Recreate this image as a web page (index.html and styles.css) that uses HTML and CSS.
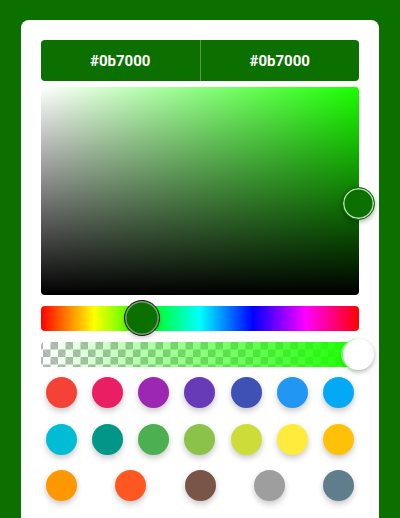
FILE: index.html
```html
<!DOCTYPE html>
<html>
<head>
<meta charset="utf-8">
<link rel="stylesheet" href="styles.css">
</head>
<body>
<div class="page">
  <div class="card">
    <div class="header">
      <div class="half">#0b7000</div>
      <div class="half right">#0b7000</div>
    </div>
    <div class="sat">
      <div class="sat-thumb"></div>
    </div>
    <div class="hue">
      <div class="hue-thumb"></div>
    </div>
    <div class="alpha">
      <div class="alpha-fill"></div>
      <div class="alpha-thumb"></div>
    </div>
    <div class="swatches">
      <div class="row">
        <span class="sw" style="background:#f44336"></span>
        <span class="sw" style="background:#e91e63"></span>
        <span class="sw" style="background:#9c27b0"></span>
        <span class="sw" style="background:#673ab7"></span>
        <span class="sw" style="background:#3f51b5"></span>
        <span class="sw" style="background:#2196f3"></span>
        <span class="sw" style="background:#03a9f4"></span>
      </div>
      <div class="row">
        <span class="sw" style="background:#00bcd4"></span>
        <span class="sw" style="background:#009688"></span>
        <span class="sw" style="background:#4caf50"></span>
        <span class="sw" style="background:#8bc34a"></span>
        <span class="sw" style="background:#cddc39"></span>
        <span class="sw" style="background:#ffeb3b"></span>
        <span class="sw" style="background:#ffc107"></span>
      </div>
      <div class="row">
        <span class="sw" style="background:#ff9800"></span>
        <span class="sw" style="background:#ff5722"></span>
        <span class="sw" style="background:#795548"></span>
        <span class="sw" style="background:#9e9e9e"></span>
        <span class="sw" style="background:#607d8b"></span>
      </div>
    </div>
  </div>
</div>
</body>
</html>
```
FILE: styles.css
```css
html, body {
  margin: 0;
  padding: 0;
  background: #0b7000;
  height: 100%;
  overflow: hidden;
}
.page {
  padding: 20px 21px 0 21px;
  font-family: Roboto, "Liberation Sans", sans-serif;
}
.card {
  background: #fff;
  border-radius: 8px;
  padding: 20px 20px 40px 20px;
  min-height: 560px;
  box-sizing: border-box;
}
.header {
  display: flex;
  height: 41px;
  border-radius: 4px;
  overflow: hidden;
  background: #0b7000;
}
.half {
  flex: 1;
  display: flex;
  align-items: center;
  justify-content: center;
  color: #fff;
  font-weight: 700;
  font-size: 15px;
}
.half.right {
  border-left: 1px solid rgba(255,255,255,0.3);
}
.sat {
  position: relative;
  margin-top: 6px;
  height: 208px;
  border-radius: 4px;
  background:
    linear-gradient(to top, #000, rgba(0,0,0,0)),
    linear-gradient(to right, #fff, #1aff00);
}
.sat-thumb {
  position: absolute;
  right: -16px;
  top: 99.5px;
  width: 33px;
  height: 33px;
  box-sizing: border-box;
  border-radius: 50%;
  background: #0b7000;
  border: 1px solid #0b7000;
  box-shadow: inset 0 0 0 1.5px rgba(255,255,255,0.75), 0 2px 5px rgba(0,0,0,0.3);
}
.hue {
  position: relative;
  margin-top: 11px;
  height: 25px;
  border-radius: 4px;
  background: linear-gradient(to right, #f00 0%, #ff0 16.66%, #0f0 33.33%, #0ff 50%, #00f 66.66%, #f0f 83.33%, #f00 100%);
}
.hue-thumb {
  position: absolute;
  left: 82.5px;
  top: -6px;
  width: 36px;
  height: 36px;
  box-sizing: border-box;
  border-radius: 50%;
  background: #0b7000;
  border: 1.5px solid #1a1a1a;
  box-shadow: inset 0 0 0 1.5px rgba(180,180,180,0.7), 0 2px 4px rgba(0,0,0,0.2);
}
.alpha {
  position: relative;
  margin-top: 11px;
  height: 25px;
  border-radius: 4px;
  background-color: #fff;
  background-image:
    linear-gradient(45deg, #b4b4b4 25%, transparent 25%, transparent 75%, #b4b4b4 75%),
    linear-gradient(45deg, #b4b4b4 25%, transparent 25%, transparent 75%, #b4b4b4 75%);
  background-size: 15px 15px;
  background-position: 2px 0, 9.5px 7.5px;
}
.alpha-fill {
  position: absolute;
  inset: 0;
  border-radius: 4px;
  background: linear-gradient(to right, rgba(26,255,0,0), rgba(26,255,0,1));
}
.alpha-thumb {
  position: absolute;
  right: -15px;
  top: -3px;
  width: 31px;
  height: 31px;
  border-radius: 50%;
  background: #fff;
  box-shadow: -2px 0 0 0 rgba(140,255,120,0.8), 0 2px 5px rgba(0,0,0,0.3);
}
.swatches {
  margin-top: 10px;
  display: flex;
  flex-direction: column;
  gap: 15.5px;
}
.row {
  display: flex;
  justify-content: space-between;
  padding: 0 5px;
}
.sw {
  display: block;
  width: 31px;
  height: 31px;
  border-radius: 50%;
  box-shadow: 0 3px 6px rgba(0,0,0,0.22);
}
```
